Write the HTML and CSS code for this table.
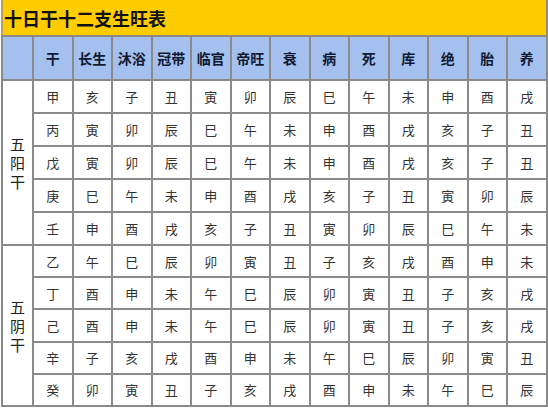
FILE: index.html
```html
<!DOCTYPE html>
<html lang="zh">
<head>
<meta charset="utf-8">
<link rel="stylesheet" href="styles.css">
</head>
<body>
<table class="tbl">
  <colgroup>
    <col class="c0"><col class="c"><col class="c"><col class="c"><col class="c"><col class="c"><col class="c"><col class="c"><col class="c"><col class="c"><col class="c"><col class="c"><col class="c"><col class="c">
  </colgroup>
  <tr class="title-row"><td colspan="14" class="title">十日干十二支生旺表</td></tr>
  <tr class="head">
    <th></th><th>干</th><th>长生</th><th>沐浴</th><th>冠带</th><th>临官</th><th>帝旺</th><th>衰</th><th>病</th><th>死</th><th>库</th><th>绝</th><th>胎</th><th>养</th>
  </tr>
  <tr class="r1"><td rowspan="5" class="grp"><span class="v">五</span><span class="v">阳</span><span class="v">干</span></td><td>甲</td><td>亥</td><td>子</td><td>丑</td><td>寅</td><td>卯</td><td>辰</td><td>巳</td><td>午</td><td>未</td><td>申</td><td>酉</td><td>戌</td></tr>
  <tr class="r1"><td>丙</td><td>寅</td><td>卯</td><td>辰</td><td>巳</td><td>午</td><td>未</td><td>申</td><td>酉</td><td>戌</td><td>亥</td><td>子</td><td>丑</td></tr>
  <tr class="r1"><td>戊</td><td>寅</td><td>卯</td><td>辰</td><td>巳</td><td>午</td><td>未</td><td>申</td><td>酉</td><td>戌</td><td>亥</td><td>子</td><td>丑</td></tr>
  <tr class="r1"><td>庚</td><td>巳</td><td>午</td><td>未</td><td>申</td><td>酉</td><td>戌</td><td>亥</td><td>子</td><td>丑</td><td>寅</td><td>卯</td><td>辰</td></tr>
  <tr class="r1"><td>壬</td><td>申</td><td>酉</td><td>戌</td><td>亥</td><td>子</td><td>丑</td><td>寅</td><td>卯</td><td>辰</td><td>巳</td><td>午</td><td>未</td></tr>
  <tr class="r2"><td rowspan="5" class="grp"><span class="v">五</span><span class="v">阴</span><span class="v">干</span></td><td>乙</td><td>午</td><td>巳</td><td>辰</td><td>卯</td><td>寅</td><td>丑</td><td>子</td><td>亥</td><td>戌</td><td>酉</td><td>申</td><td>未</td></tr>
  <tr class="r2"><td>丁</td><td>酉</td><td>申</td><td>未</td><td>午</td><td>巳</td><td>辰</td><td>卯</td><td>寅</td><td>丑</td><td>子</td><td>亥</td><td>戌</td></tr>
  <tr class="r2"><td>己</td><td>酉</td><td>申</td><td>未</td><td>午</td><td>巳</td><td>辰</td><td>卯</td><td>寅</td><td>丑</td><td>子</td><td>亥</td><td>戌</td></tr>
  <tr class="r2"><td>辛</td><td>子</td><td>亥</td><td>戌</td><td>酉</td><td>申</td><td>未</td><td>午</td><td>巳</td><td>辰</td><td>卯</td><td>寅</td><td>丑</td></tr>
  <tr class="r2"><td>癸</td><td>卯</td><td>寅</td><td>丑</td><td>子</td><td>亥</td><td>戌</td><td>酉</td><td>申</td><td>未</td><td>午</td><td>巳</td><td>辰</td></tr>
</table>
</body>
</html>
```

FILE: styles.css
```css
html, body {
  margin: 0;
  padding: 0;
  background: #ffffff;
}
body {
  font-family: "Noto Sans CJK SC", "Noto Sans", sans-serif;
  color: #222;
}
.tbl {
  margin-left: 1px;
  border-collapse: collapse;
  table-layout: fixed;
  width: 545px;
}
.c0 { width: 31px; }
.c { width: 39.5px; }
.tbl td, .tbl th {
  border: 2px solid #8a8a8a;
  padding: 0;
  text-align: center;
  vertical-align: middle;
}
.title-row { height: 36px; }
.title {
  background: #ffcc00;
  text-align: left !important;
  font-size: 18px;
  font-weight: bold;
  color: #111;
  padding-left: 1px !important;
  border-top: 0 !important;
  border-left: 2px solid #b9a04a !important;
}
.head { height: 44px; }
.head th {
  background: #a4c0ee;
  font-size: 14px;
  font-weight: bold;
  color: #111a33;
}
.r1 { height: 33px; }
.r2 { height: 32.2px; }
.r1 td, .r2 td {
  font-size: 13px;
  color: #333;
}
.grp {
  color: #222 !important;
}
.v {
  display: block;
  font-size: 15px;
  line-height: 19px;
  height: 19px;
  overflow: hidden;
}
```
